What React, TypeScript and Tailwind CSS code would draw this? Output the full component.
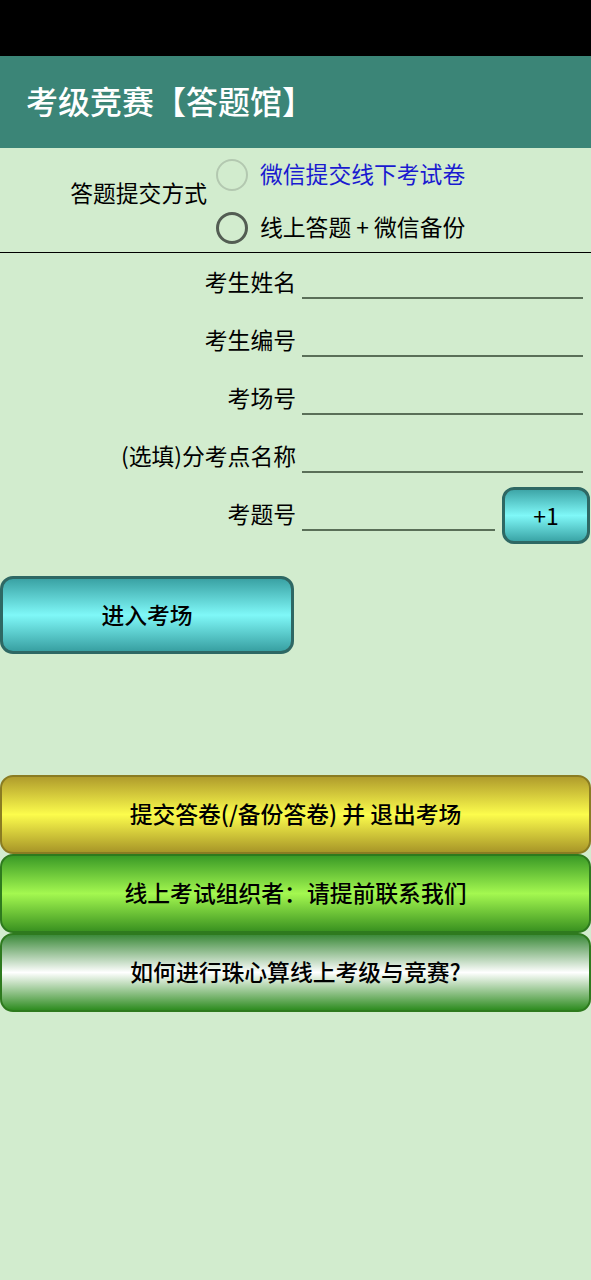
import { useState } from 'react';

const FONT = { fontFamily: '"Noto Sans CJK SC", "Noto Sans", sans-serif' };

const fields = [
  { label: '考生姓名' },
  { label: '考生编号' },
  { label: '考场号' },
  { label: '(选填)分考点名称' },
];

function Radio({ checked, light }: { checked: boolean; light?: boolean }) {
  return (
    <span
      className={`flex h-[32px] w-[32px] items-center justify-center rounded-full ${
        light ? 'border-2 border-[#b3c8b0]' : 'border-[3px] border-[#535d53]'
      }`}
    >
      {checked && <span className="h-[16px] w-[16px] rounded-full bg-[#535d53]" />}
    </span>
  );
}

export default function App() {
  const [mode, setMode] = useState<number | null>(null);
  const [questionNo, setQuestionNo] = useState('');

  return (
    <div className="flex min-h-[1280px] w-[591px] flex-col bg-[#d2ecce] text-black" style={FONT}>
      {/* status bar */}
      <div className="h-[56px] bg-black" />

      {/* header */}
      <div className="flex h-[92px] items-center bg-[#3b8577] pl-[26px]">
        <h1 className="pb-[4px] text-[32px] font-medium leading-none text-white">考级竞赛【答题馆】</h1>
      </div>

      {/* submit mode */}
      <div className="flex h-[105px] items-center border-b border-black">
        <div className="w-[216px] pb-[14px] pr-[9px] text-right text-[22.8px]">答题提交方式</div>
        <div className="flex flex-col gap-[21px] pt-[2px]">
          <button className="flex items-center gap-[12px]" onClick={() => setMode(0)}>
            <Radio checked={mode === 0} light />
            <span className="text-[22.8px] leading-none text-[#1a1ad0]">微信提交线下考试卷</span>
          </button>
          <button className="flex items-center gap-[12px]" onClick={() => setMode(1)}>
            <Radio checked={mode === 1} />
            <span className="whitespace-pre text-[22.8px] leading-none">线上答题 + 微信备份</span>
          </button>
        </div>
      </div>

      {/* form */}
      <div className="flex flex-col pt-[2px]">
        {fields.map((f) => (
          <div key={f.label} className="flex h-[58px] items-center">
            <div className="w-[296px] pb-[3px] text-right text-[22.8px] leading-none">{f.label}</div>
            <div className="ml-[6px] mr-[8px] flex-1 self-stretch pb-[14px]">
              <input className="h-full w-full border-b-2 border-[#5a6f58] bg-transparent pt-[14px] text-[20px] outline-none" />
            </div>
          </div>
        ))}
        <div className="flex h-[58px] items-center">
          <div className="w-[296px] pb-[3px] text-right text-[22.8px] leading-none">考题号</div>
          <div className="ml-[6px] w-[193px] self-stretch pb-[14px]">
            <input
              value={questionNo}
              onChange={(e) => setQuestionNo(e.target.value)}
              className="h-full w-full border-b-2 border-[#5a6f58] bg-transparent pt-[14px] text-[20px] outline-none"
            />
          </div>
          <button
            onClick={() => setQuestionNo(String((parseInt(questionNo) || 0) + 1))}
            className="ml-[7px] mb-[2px] flex h-[57px] w-[88px] items-center justify-center rounded-[12px] border-[3px] border-[#2e6864] bg-[linear-gradient(to_bottom,#3ea6a8,#7ff8f8_50%,#3aa4a6)] text-[23px]"
          >
            +1
          </button>
        </div>
      </div>

      <div className="pt-[31px]">
        <button className="flex h-[78px] w-[294px] items-center justify-center rounded-[13px] border-[3px] border-[#2e6864] bg-[linear-gradient(to_bottom,#3aa2a4,#7ff8f8_50%,#38a0a2)] text-[22.8px] font-medium">
          进入考场
        </button>
      </div>

      {/* bottom buttons */}
      <div className="mt-[121px] flex flex-col">
        <button className="flex h-[79px] w-[591px] items-center justify-center rounded-[13px] border-2 border-[#8a7c22] bg-[linear-gradient(to_bottom,#b09c2c,#fcfc4c_50%,#a89628)] text-[22.8px] font-medium">
          提交答卷(/备份答卷) 并 退出考场
        </button>
        <button className="flex h-[79px] w-[591px] items-center justify-center rounded-[13px] border-2 border-[#2e7a1e] bg-[linear-gradient(to_bottom,#3a9a26,#a4f850_50%,#3a9220)] text-[22.8px] font-medium">
          线上考试组织者：请提前联系我们
        </button>
        <button className="flex h-[79px] w-[591px] items-center justify-center rounded-[13px] border-2 border-[#2e7a1e] bg-[linear-gradient(to_bottom,#3c8a3a,#ffffff_50%,#2e8c20)] text-[22.8px] font-medium">
          如何进行珠心算线上考级与竞赛?
        </button>
      </div>
    </div>
  );
}
